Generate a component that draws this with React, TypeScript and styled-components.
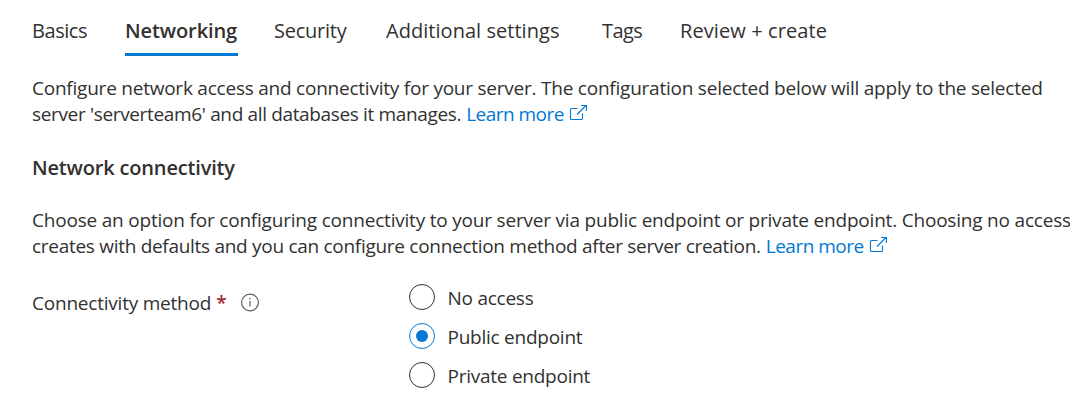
import React from "react";
import styled, { createGlobalStyle } from "styled-components";

const GlobalStyle = createGlobalStyle`
  * { box-sizing: border-box; }
  body {
    margin: 0;
    background: #fff;
    color: #323130;
    font-family: "Segoe UI", "Open Sans", "Noto Sans", sans-serif;
    font-size: 19px;
    overflow: hidden;
  }
`;

const Page = styled.main`
  width: 1070px;
  height: 414px;
  padding: 16px 0 0 32px;
  overflow: hidden;
  background: #fff;
`;

const TabList = styled.nav`
  display: flex;
  height: 40px;
  font-size: 20px;
`;

const Tab = styled.a<{ $width: number; $gap: number; $track: number; $active?: boolean }>`
  flex: none;
  width: ${(p) => p.$width}px;
  margin-right: ${(p) => p.$gap}px;
  border-bottom: 3px solid ${(p) => (p.$active ? "#0078d4" : "transparent")};
  line-height: 30px;
  white-space: nowrap;
  font-weight: ${(p) => (p.$active ? 600 : 400)};
  letter-spacing: ${(p) => p.$track}px;
`;

const Paragraph = styled.p<{ $top: number }>`
  margin: ${(p) => p.$top}px 0 0;
  line-height: 26px;
  white-space: nowrap;
`;

const Line = styled.span<{ $track: number }>`
  display: flex;
  align-items: center;
  height: 26px;
  letter-spacing: ${(p) => p.$track}px;
`;

const Link = styled.a`
  display: inline-flex;
  align-items: center;
  margin-left: 5px;
  color: #0078d4;
  letter-spacing: -0.52px;
`;

const LinkIcon = styled.svg`
  width: 18px;
  height: 18px;
  margin: -3px 0 0 5px;
`;

const Heading = styled.h2`
  margin: 28px 0 0;
  font-size: 20px;
  font-weight: 600;
  line-height: 26px;
  letter-spacing: -0.17px;
`;

const Field = styled.div`
  display: flex;
  margin-top: 25px;
`;

const Label = styled.div`
  display: flex;
  align-items: center;
  width: 377px;
  height: 26px;
  margin-top: 6px;
  letter-spacing: -0.22px;
`;

const Required = styled.span`
  margin-left: 5px;
  color: #a4262c;
  font-weight: 600;
`;

const InfoIcon = styled.svg`
  width: 20px;
  height: 20px;
  margin: -1px 0 0 14px;
`;

const Options = styled.div`
  display: flex;
  flex-direction: column;
  gap: 13px;
`;

const Option = styled.label`
  display: flex;
  align-items: center;
  gap: 12.5px;
  height: 26px;
  letter-spacing: -0.25px;
`;

const Radio = styled.span<{ $checked?: boolean }>`
  display: grid;
  place-items: center;
  width: 26px;
  height: 26px;
  border: 1px solid ${(p) => (p.$checked ? "#0078d4" : "#323130")};
  border-radius: 50%;

  &::after {
    content: "";
    width: 12px;
    height: 12px;
    border-radius: 50%;
    background: ${(p) => (p.$checked ? "#0078d4" : "transparent")};
  }
`;

const OptionText = styled.span`
  padding-top: 2px;
`;

const LearnMore = () => (
  <Link>
    <span>Learn more</span>
    <LinkIcon viewBox="0 0 18 18" fill="none" stroke="#0078d4" strokeWidth="1.1">
      <path d="M8.5 4.5H2.5Q1.5 4.5 1.5 5.5V14.5Q1.5 15.5 2.5 15.5H12.5Q13.5 15.5 13.5 14.5V9.5" />
      <path d="M8 10.5L17 1.5M12 1.5H17.5V7" />
    </LinkIcon>
  </Link>
);

const tabs = [
  { name: "Basics", width: 56, gap: 37, track: -0.45 },
  { name: "Networking", width: 113, gap: 36, track: -0.1, active: true },
  { name: "Security", width: 74, gap: 38, track: -0.25 },
  { name: "Additional settings", width: 174, gap: 42, track: 0.04 },
  { name: "Tags", width: 41, gap: 37, track: -0.6 },
  { name: "Review + create", width: 148, gap: 0, track: 0.1 },
];

const options = [
  { name: "No access" },
  { name: "Public endpoint", checked: true },
  { name: "Private endpoint" },
];

export default function App() {
  return (
    <>
      <GlobalStyle />
      <Page>
        <TabList>
          {tabs.map((t) => (
            <Tab key={t.name} $width={t.width} $gap={t.gap} $track={t.track} $active={t.active}>
              {t.name}
            </Tab>
          ))}
        </TabList>
        <Paragraph $top={19}>
          <Line $track={-0.23}>
            Configure network access and connectivity for your server. The configuration selected below will apply to the selected
          </Line>
          <Line $track={-0.35}>
            server 'serverteam6' and all databases it manages. <LearnMore />
          </Line>
        </Paragraph>
        <Heading>Network connectivity</Heading>
        <Paragraph $top={26}>
          <Line $track={-0.2}>
            Choose an option for configuring connectivity to your server via public endpoint or private endpoint. Choosing no access
          </Line>
          <Line $track={-0.29}>
            creates with defaults and you can configure connection method after server creation. <LearnMore />
          </Line>
        </Paragraph>
        <Field>
          <Label>
            Connectivity method<Required>*</Required>
            <InfoIcon viewBox="0 0 20 20" fill="none" stroke="#605e5c" strokeWidth="1.2">
              <circle cx="10" cy="9.5" r="8.4" />
              <path d="M10 8V13.5M10 5.1V6.5" />
            </InfoIcon>
          </Label>
          <Options>
            {options.map((o) => (
              <Option key={o.name}>
                <Radio $checked={o.checked} />
                <OptionText>{o.name}</OptionText>
              </Option>
            ))}
          </Options>
        </Field>
      </Page>
    </>
  );
}
